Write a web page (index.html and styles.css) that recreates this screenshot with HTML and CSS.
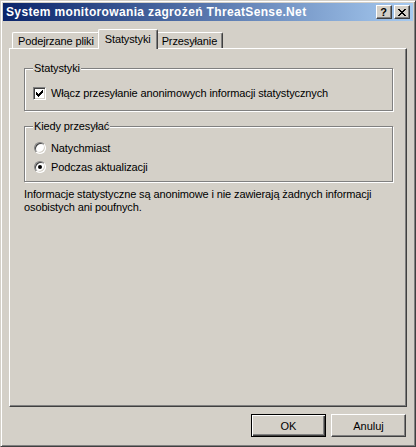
FILE: index.html
```html
<!DOCTYPE html>
<html>
<head>
    <title>System monitorowania zagrożeń ThreatSense.Net</title>
    <link rel="stylesheet" href="styles.css">
</head>
<body>
<div class="window">
    <div class="titlebar">
        <span class="title">System monitorowania zagrożeń ThreatSense.Net</span>
        <div class="caption-buttons">
            <div class="caption-btn help">?</div>
            <div class="caption-btn">
                <svg width="8" height="7" viewBox="0 0 8 7" shape-rendering="crispEdges">
                    <path d="M0 0h2v1h-2z M6 0h2v1h-2z M1 1h2v1h-2z M5 1h2v1h-2z M2 2h4v1h-4z M3 3h2v1h-2z M2 4h4v1h-4z M1 5h2v1h-2z M5 5h2v1h-2z M0 6h2v1h-2z M6 6h2v1h-2z" fill="#000"/>
                </svg>
            </div>
        </div>
    </div>

    <div class="content">
        <div class="tabs">
            <div class="tab">Podejrzane pliki</div>
            <div class="tab active">Statystyki</div>
            <div class="tab">Przesyłanie</div>
        </div>

        <div class="panel">
            <fieldset class="group">
                <legend>Statystyki</legend>
                <div class="option">
                    <span class="checkbox">
                        <svg width="7" height="7" viewBox="0 0 7 7" shape-rendering="crispEdges">
                            <path d="M0 2h1v3h-1z M1 3h1v3h-1z M2 4h1v3h-1z M3 3h1v3h-1z M4 2h1v3h-1z M5 1h1v3h-1z M6 0h1v3h-1z" fill="#000"/>
                        </svg>
                    </span>
                    <span>Włącz przesyłanie anonimowych informacji statystycznych</span>
                </div>
            </fieldset>

            <fieldset class="group second">
                <legend>Kiedy przesyłać</legend>
                <div class="option">
                    <span class="radio"></span>
                    <span>Natychmiast</span>
                </div>
                <div class="option">
                    <span class="radio checked"></span>
                    <span>Podczas aktualizacji</span>
                </div>
            </fieldset>

            <p class="info">Informacje statystyczne są anonimowe i nie zawierają żadnych informacji<br>osobistych ani poufnych.</p>
        </div>

        <div class="buttons">
            <button class="default">OK</button>
            <button>Anuluj</button>
        </div>
    </div>
</div>
</body>
</html>
```

FILE: styles.css
```css
body {
    margin: 0;
    font-family: "Liberation Sans", Arial, sans-serif;
    font-size: 11px;
    letter-spacing: -0.12px;
    color: #000;
    background-color: #d4d0c8;
}

.window {
    width: 416px;
    height: 447px;
    box-sizing: border-box;
    display: flex;
    flex-direction: column;
    padding: 2px;
    background-color: #d4d0c8;
    border: 1px solid;
    border-color: #d4d0c8 #404040 #404040 #d4d0c8;
    box-shadow: inset 1px 1px #fff, inset -1px -1px #808080;
}

.titlebar {
    height: 18px;
    display: flex;
    align-items: center;
    padding: 0 3px 0 3px;
    background: linear-gradient(to right, #0a246a, #a6caf0);
    color: #fff;
    font-weight: bold;
}

.title {
    flex: 1;
    font-size: 12px;
    letter-spacing: 0.35px;
}

.caption-buttons {
    display: flex;
    gap: 2px;
}

.caption-btn {
    width: 16px;
    height: 14px;
    box-sizing: border-box;
    display: flex;
    align-items: center;
    justify-content: center;
    background-color: #d4d0c8;
    border: 1px solid;
    border-color: #fff #404040 #404040 #fff;
    box-shadow: inset -1px -1px #808080;
    color: #000;
}

.caption-btn.help {
    font-weight: bold;
    font-size: 11px;
    line-height: 12px;
    padding-right: 1px;
}

.content {
    flex: 1;
    display: flex;
    flex-direction: column;
    padding: 8px 6px 7px 6px;
}

.tabs {
    display: flex;
    align-items: flex-end;
    height: 19px;
    padding-left: 3px;
    position: relative;
    z-index: 1;
}

.tab {
    height: 16px;
    box-sizing: border-box;
    padding: 1px 5px 0 5px;
    line-height: 14px;
    border-top: 1px solid #fff;
    border-left: 1px solid #fff;
    border-right: 1px solid #404040;
    border-radius: 2px 2px 0 0;
    box-shadow: inset -1px 0 #808080;
    background-color: #d4d0c8;
}

.tab.active {
    height: 20px;
    margin: 0 -2px -1px -2px;
    padding: 2px 6px 0 6px;
    position: relative;
    z-index: 1;
}

.panel {
    flex: 1;
    padding: 13px 13px 0 14px;
    border: 1px solid;
    border-color: #fff #404040 #404040 #fff;
    box-shadow: inset -1px -1px #808080;
}

.group {
    margin: 0;
    padding: 10px 8px 9px 8px;
    border: 1px solid #808080;
    box-shadow: inset 1px 1px #fff, 1px 1px #fff;
}

.group legend {
    padding: 0 1px;
    line-height: 13px;
    background-color: #d4d0c8;
}

.group.second {
    margin-top: 9px;
    padding-top: 7px;
    padding-bottom: 6px;
}

.option {
    display: flex;
    align-items: center;
    height: 16px;
    gap: 5px;
}

.option + .option {
    margin-top: 3px;
}

.checkbox {
    width: 13px;
    height: 13px;
    box-sizing: border-box;
    display: flex;
    align-items: center;
    justify-content: center;
    background-color: #fff;
    border: 1px solid;
    border-color: #808080 #fff #fff #808080;
    box-shadow: inset 1px 1px #404040, inset -1px -1px #d4d0c8;
}

.radio {
    width: 12px;
    height: 12px;
    margin-left: 1px;
    box-sizing: border-box;
    position: relative;
    border-radius: 50%;
    background-color: #fff;
    border: 1px solid;
    border-color: #808080 #fff #fff #808080;
    box-shadow: inset 1px 1px #404040, inset -1px -1px #d4d0c8;
}

.radio.checked::after {
    content: "";
    position: absolute;
    left: 3px;
    top: 3px;
    width: 4px;
    height: 4px;
    border-radius: 50%;
    background-color: #000;
}

.info {
    margin: 6px 0 0 0;
    line-height: 13px;
}

.buttons {
    display: flex;
    justify-content: flex-end;
    gap: 5px;
    margin-top: 7px;
    padding-right: 1px;
}

button {
    width: 75px;
    height: 23px;
    padding: 0;
    font-family: inherit;
    font-size: 11px;
    color: #000;
    background-color: #d4d0c8;
    border: 1px solid;
    border-color: #fff #404040 #404040 #fff;
    box-shadow: inset -1px -1px #808080;
}

button.default {
    border-color: #000;
    box-shadow: inset 1px 1px #fff, inset -1px -1px #404040, inset -2px -2px #808080;
}
```
